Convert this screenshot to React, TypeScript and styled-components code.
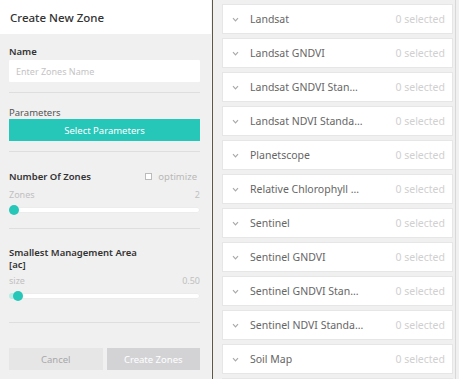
import * as React from "react";
import styled, { createGlobalStyle } from "styled-components";

const TEAL = "#26c6b9";

const GlobalStyle = createGlobalStyle`
  html, body {
    margin: 0;
    padding: 0;
    background: #f0f0f0;
    font-family: "Noto Sans", "Open Sans", sans-serif;
  }
  * { box-sizing: border-box; }
`;

const Page = styled.div`
  display: flex;
  height: 379px;
  width: 459px;
  overflow: hidden;
`;

const LeftPanel = styled.div`
  width: 212px;
  flex: none;
  display: flex;
  flex-direction: column;
  background: #f0f0f0;
  border-right: 1px solid #f5f5f5;
`;

const Splitter = styled.div`
  width: 1px;
  flex: none;
  background: #5e5646;
`;

const Header = styled.div`
  height: 34px;
  background: #fff;
  display: flex;
  align-items: center;
  padding-left: 10px;
  font-size: 11.5px;
  font-weight: 500;
  color: #333;
`;

const Body = styled.div`
  padding: 0 11px 0 9px;
  display: flex;
  flex-direction: column;
`;

interface ISection {
  top: number;
  bottom: number;
}
const Section = styled.div<ISection>`
  padding-top: ${({ top }) => top}px;
  padding-bottom: ${({ bottom }) => bottom}px;
  border-bottom: 1px solid #dedede;
`;

const Label = styled.div`
  font-size: 9.5px;
  font-weight: 600;
  color: #333;
  line-height: 12px;
`;

const LightLabel = styled.div`
  font-size: 9.5px;
  color: #555;
  line-height: 12px;
`;

const Input = styled.input`
  display: block;
  width: 100%;
  height: 22px;
  margin-top: 2px;
  border: none;
  border-radius: 1px;
  background: #fff;
  padding: 0 7px;
  font-family: inherit;
  font-size: 9px;
  color: #333;
  outline: none;
  &::placeholder {
    color: #c4c4c4;
  }
`;

const TealButton = styled.button`
  display: block;
  width: 100%;
  height: 22px;
  border: none;
  background: ${TEAL};
  color: #fff;
  font-family: inherit;
  font-size: 9.5px;
  padding: 0;
`;

const Row = styled.div`
  display: flex;
  align-items: center;
  justify-content: space-between;
`;

const Optimize = styled.label`
  display: flex;
  align-items: center;
  gap: 6px;
  font-size: 9.5px;
  color: #b8b8b8;
  margin-right: 3px;
`;

const CheckBox = styled.span`
  width: 7px;
  height: 7px;
  border: 1px solid #bbb;
  background: #fff;
`;

const Caption = styled(Row)`
  font-size: 9px;
  color: #c0c0c0;
  line-height: 12px;
`;

const Track = styled.div`
  position: relative;
  height: 6px;
  border-radius: 3px;
  background: #fff;
  box-shadow: inset 0 0 0 1px #ececec;
`;

const Fill = styled.div`
  position: absolute;
  left: 0;
  top: 0;
  height: 6px;
  border-radius: 3px;
  background: #b8ece7;
`;

const Thumb = styled.div`
  position: absolute;
  top: 50%;
  width: 10px;
  height: 10px;
  margin-left: -5px;
  margin-top: -5px;
  border-radius: 50%;
  background: ${TEAL};
`;

const Footer = styled.div`
  display: flex;
  gap: 4px;
  padding-top: 25px;
`;

interface IFootButton {
  bg: string;
}
const FootButton = styled.button<IFootButton>`
  flex: 1;
  height: 22px;
  border: none;
  background: ${({ bg }) => bg};
  color: #fff;
  font-family: inherit;
  font-size: 9.5px;
  padding: 0;
`;

const CancelButton = styled(FootButton)`
  color: #a8a8a8;
`;

const RightPanel = styled.div`
  flex: 1;
  padding: 4px 0 0 9px;
  display: flex;
  flex-direction: column;
  gap: 4px;
  background: #f0f0f0;
  border-right: 1px solid #d8d8d8;
  margin-right: 3px;
  overflow: hidden;
`;

const Card = styled.div`
  flex: none;
  width: 231px;
  height: 30px;
  background: #fff;
  border: 1px solid #e6e6e6;
  display: flex;
  align-items: center;
  padding: 0 7px 0 9px;
  font-size: 10.5px;
`;

const Chevron = styled.svg`
  width: 7px;
  height: 5px;
  flex: none;
  margin-right: 11px;
`;

const Name = styled.span`
  color: #666;
  white-space: nowrap;
`;

const Count = styled.span`
  margin-left: auto;
  color: #d0d0d0;
  white-space: nowrap;
`;

const LAYERS = [
  "Landsat",
  "Landsat GNDVI",
  "Landsat GNDVI Stan...",
  "Landsat NDVI Standa...",
  "Planetscope",
  "Relative Chlorophyll ...",
  "Sentinel",
  "Sentinel GNDVI",
  "Sentinel GNDVI Stan...",
  "Sentinel NDVI Standa...",
  "Soil Map",
];

export default function App() {
  return (
    <Page>
      <GlobalStyle />
      <LeftPanel>
        <Header>Create New Zone</Header>
        <Body>
          <Section top={12} bottom={10}>
            <Label>Name</Label>
            <Input placeholder="Enter Zones Name" />
          </Section>
          <Section top={14} bottom={10}>
            <LightLabel>Parameters</LightLabel>
            <TealButton>Select Parameters</TealButton>
          </Section>
          <Section top={18} bottom={15}>
            <Row>
              <Label>Number Of Zones</Label>
              <Optimize>
                <CheckBox />
                optimize
              </Optimize>
            </Row>
            <Caption style={{ marginTop: 6 }}>
              <span>Zones</span>
              <span>2</span>
            </Caption>
            <Track style={{ marginTop: 6 }}>
              <Thumb style={{ left: 5 }} />
            </Track>
          </Section>
          <Section top={18} bottom={23}>
            <Label>Smallest Management Area</Label>
            <Label>[ac]</Label>
            <Caption style={{ marginTop: 4 }}>
              <span>size</span>
              <span>0.50</span>
            </Caption>
            <Track style={{ marginTop: 6 }}>
              <Fill style={{ width: 12 }} />
              <Thumb style={{ left: 9 }} />
            </Track>
          </Section>
          <Footer>
            <CancelButton bg="#e6e6e6">Cancel</CancelButton>
            <FootButton bg="#d3d3d6">Create Zones</FootButton>
          </Footer>
        </Body>
      </LeftPanel>
      <Splitter />
      <RightPanel>
        {LAYERS.map(name => (
          <Card key={name}>
            <Chevron viewBox="0 0 7 5">
              <path d="M1 1.2 L3.5 3.8 L6 1.2" fill="none" stroke="#aaa" strokeWidth="1.2" />
            </Chevron>
            <Name>{name}</Name>
            <Count>0 selected</Count>
          </Card>
        ))}
        <Card />
      </RightPanel>
    </Page>
  );
}
